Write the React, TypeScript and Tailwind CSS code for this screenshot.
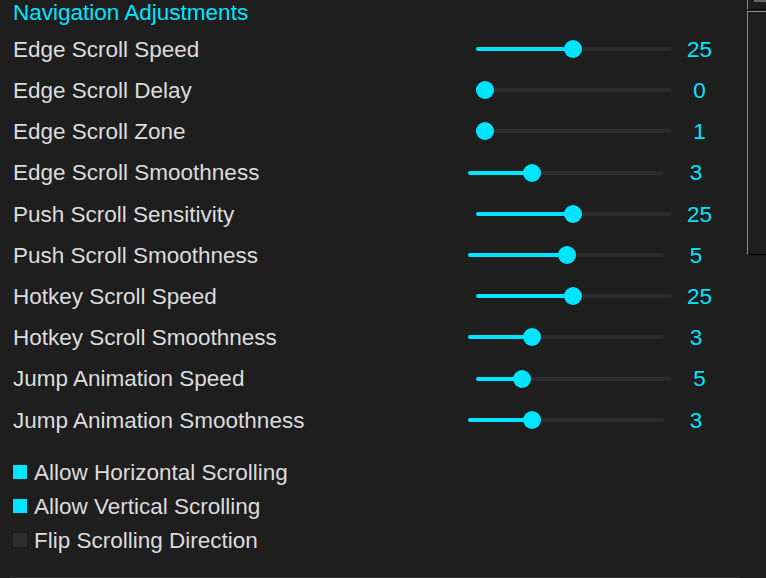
import React from "react";

type Row = { label: string; value: string; start: number; thumb: number };

const rows: Row[] = [
  { label: "Edge Scroll Speed", value: "25", start: 476, thumb: 573 },
  { label: "Edge Scroll Delay", value: "0", start: 476, thumb: 485 },
  { label: "Edge Scroll Zone", value: "1", start: 476, thumb: 485 },
  { label: "Edge Scroll Smoothness", value: "3", start: 468, thumb: 532 },
  { label: "Push Scroll Sensitivity", value: "25", start: 476, thumb: 573 },
  { label: "Push Scroll Smoothness", value: "5", start: 468, thumb: 567 },
  { label: "Hotkey Scroll Speed", value: "25", start: 476, thumb: 573 },
  { label: "Hotkey Scroll Smoothness", value: "3", start: 468, thumb: 532 },
  { label: "Jump Animation Speed", value: "5", start: 476, thumb: 522 },
  { label: "Jump Animation Smoothness", value: "3", start: 468, thumb: 532 },
];

const checks = [
  { label: "Allow Horizontal Scrolling", on: true },
  { label: "Allow Vertical Scrolling", on: true },
  { label: "Flip Scrolling Direction", on: false },
];

function SliderRow({ r }: { r: Row }) {
  const fill = r.thumb - r.start;
  return (
    <div className="flex items-center h-[41.2px]">
      <div className="w-[455px] shrink-0 pl-[13px] pt-[2px] text-[22.5px] text-[#dcdcdc] leading-none">{r.label}</div>
      <div className="flex items-center" style={{ marginLeft: r.start - 455 }}>
        <div className="relative h-[4px] w-[196px] rounded-full bg-[#2b2b2b]">
          <div className="absolute left-0 top-0 h-[4px] rounded-full bg-[#00e5ff]" style={{ width: fill }} />
          <div
            className="absolute top-[-7px] h-[18px] w-[18px] rounded-full bg-[#00e5ff]"
            style={{ left: fill - 9 }}
          />
        </div>
        <div
          className="w-[40px] pt-[2px] text-center text-[22.5px] text-[#00e5ff] leading-none"
          style={{ marginLeft: r.start === 468 ? 12 : 7.5 }}
        >
          {r.value}
        </div>
      </div>
    </div>
  );
}

export default function App() {
  return (
    <div
      className="relative w-[766px] h-[578px] overflow-hidden bg-[#1e1e1e]"
      style={{ fontFamily: '"Liberation Sans", Arial, sans-serif' }}
    >
      <div className="pl-[13px] h-[28.5px] pt-[1px] text-[22.5px] text-[#00e5ff] leading-[24px]">
        Navigation Adjustments
      </div>
      <div className="flex flex-col">
        {rows.map((r) => (
          <SliderRow key={r.label} r={r} />
        ))}
      </div>
      <div className="flex flex-col mt-[15px]">
        {checks.map((c) => (
          <div key={c.label} className="flex items-center h-[34px] pl-[13px]">
            <div className={`w-[14px] h-[14px] ${c.on ? "bg-[#00e5ff]" : "bg-[#2d2d2d]"}`} />
            <div className="ml-[7px] pt-[2px] text-[22.5px] text-[#dcdcdc] leading-none">{c.label}</div>
          </div>
        ))}
      </div>

      {/* scrollbar fragments on the right */}
      <div className="absolute left-[747px] top-[-10px] w-[30px] h-[20px] border-l border-b border-l-[#8a8a8a] border-b-black">
        <div className="absolute left-[6px] top-[10px] w-[20px] h-[2px] bg-[#6a6a6a]" />
      </div>
      <div className="absolute left-[747px] top-[11px] w-[30px] h-[244px] border-l border-t border-[#8a8a8a] border-b border-b-black" />
      <div className="absolute left-[10px] bottom-0 w-[730px] h-[1px] bg-[#333333]" />
    </div>
  );
}
